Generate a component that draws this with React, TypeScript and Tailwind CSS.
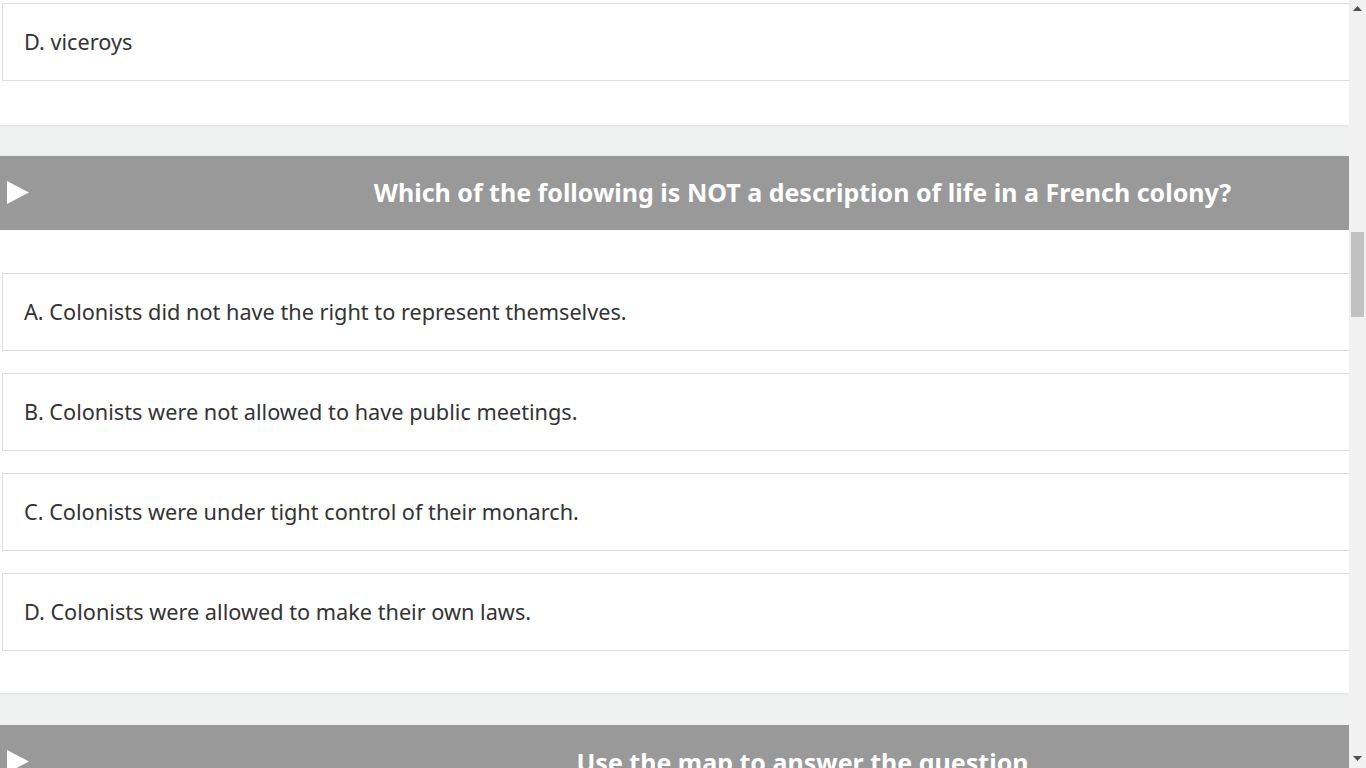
const questions = [
  {
    title: "Which of the following is NOT a description of life in a French colony?",
    options: [
      "A. Colonists did not have the right to represent themselves.",
      "B. Colonists were not allowed to have public meetings.",
      "C. Colonists were under tight control of their monarch.",
      "D. Colonists were allowed to make their own laws.",
    ],
  },
];

const font = { fontFamily: "'Noto Sans', 'Open Sans', sans-serif" };

const Option = ({ text }: { text: string }) => (
  <div className="ml-[2px] mr-[-4px] h-[78px] flex items-center border border-[#dedede] bg-white pl-[21px] text-[21.7px] text-[#333]">
    {text}
  </div>
);

const Arrow = () => (
  <svg className="absolute left-[7px] top-[25px]" width="22" height="23" viewBox="0 0 22 23">
    <polygon points="0,0 22,11.5 0,23" fill="#fff" />
  </svg>
);

const Header = ({ title }: { title: string }) => (
  <div className="relative h-[74px] bg-[#999999] flex items-center">
    <Arrow />
    <h2 className="w-full pl-[256px] text-center text-[25px] font-bold text-white">{title}</h2>
  </div>
);

const App = () => (
  <div className="flex h-[768px] w-[1366px] overflow-hidden bg-[#f0f1f1]" style={font}>
    <div className="w-[1349px] overflow-hidden">
      <div className="bg-white pt-[3px] pb-[44px] shadow-[0_1px_3px_rgba(0,0,0,0.08)]">
        <Option text="D. viceroys" />
      </div>
      <div className="mt-[31px]">
        {questions.map((q) => (
          <div key={q.title} className="bg-white shadow-[0_1px_3px_rgba(0,0,0,0.08)]">
            <Header title={q.title} />
            <div className="flex flex-col gap-[22px] pt-[43px] pb-[42px]">
              {q.options.map((o) => (
                <Option key={o} text={o} />
              ))}
            </div>
          </div>
        ))}
      </div>
      <div className="mt-[32px]">
        <div className="relative h-[74px] bg-[#999999]">
          <Arrow />
          <h2 className="w-full pt-[19px] pl-[256px] text-center text-[25px] font-bold text-white">
            Use the map to answer the question
          </h2>
        </div>
      </div>
    </div>
    <div className="relative w-[17px] bg-[#f1f1f1]">
      <svg className="absolute left-[4px] top-[6px]" width="9" height="5" viewBox="0 0 9 5">
        <polygon points="0,5 4.5,0 9,5" fill="#505050" />
      </svg>
      <div className="absolute left-[2px] top-[232px] h-[85px] w-[13px] bg-[#c1c1c1]" />
      <svg className="absolute left-[4px] top-[756px]" width="9" height="5" viewBox="0 0 9 5">
        <polygon points="0,0 4.5,5 9,0" fill="#505050" />
      </svg>
    </div>
  </div>
);

export default App;
